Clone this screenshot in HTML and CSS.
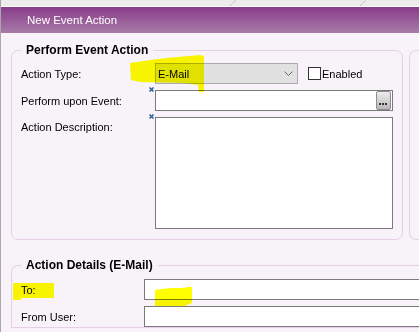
FILE: index.html
```html
<!DOCTYPE html>
<html lang="en">
<head>
    <meta charset="UTF-8">
    <meta name="viewport" content="width=device-width, initial-scale=1.0">
    <title>New Event Action</title>
    <link rel="stylesheet" href="styles.css">
</head>
<body>
    <div class="page">
        <div class="topbar">
            <svg width="418" height="6" viewBox="0 0 418 6">
                <line x1="229" y1="6" x2="235" y2="0" stroke="#a8a8a8" stroke-dasharray="1 1"/>
                <line x1="359" y1="6" x2="365" y2="0" stroke="#a8a8a8" stroke-dasharray="1 1"/>
            </svg>
        </div>
        <div class="titlebar">New Event Action</div>

        <div class="content">
            <div class="toprow">
                <fieldset class="group group-main">
                    <legend>Perform Event Action</legend>
                    <div class="form">
                        <label>Action Type:</label>
                        <div class="field field-row">
                            <div class="combo">
                                <span>E-Mail</span>
                                <svg width="9" height="5" viewBox="0 0 9 5"><path d="M0.5 0.5 L4.5 4.5 L8.5 0.5" fill="none" stroke="#666" stroke-width="1"/></svg>
                            </div>
                            <label class="check"><span class="box"></span>Enabled</label>
                        </div>

                        <label>Perform upon Event:</label>
                        <div class="field">
                            <svg class="req" width="5" height="5" viewBox="0 0 5 5"><path d="M0.5 0.5 L4.5 4.5 M4.5 0.5 L0.5 4.5" stroke="#2d5c9a" stroke-width="1.5"/></svg>
                            <div class="input with-button">
                                <span class="dots">
                                    <svg width="9" height="2" viewBox="0 0 9 2"><rect x="0" y="0" width="2" height="2" fill="#333"/><rect x="3" y="0" width="2" height="2" fill="#333"/><rect x="6" y="0" width="2" height="2" fill="#333"/></svg>
                                </span>
                            </div>
                        </div>

                        <label class="top">Action Description:</label>
                        <div class="field">
                            <svg class="req" width="5" height="5" viewBox="0 0 5 5"><path d="M0.5 0.5 L4.5 4.5 M4.5 0.5 L0.5 4.5" stroke="#2d5c9a" stroke-width="1.5"/></svg>
                            <div class="textarea"></div>
                        </div>
                    </div>
                </fieldset>
                <fieldset class="group group-side"></fieldset>
            </div>

            <fieldset class="group group-details">
                <legend>Action Details (E-Mail)</legend>
                <div class="form form-details">
                    <label>To:</label>
                    <div class="input"></div>
                    <label>From User:</label>
                    <div class="input"></div>
                </div>
            </fieldset>
        </div>
    </div>

    <!-- yellow marker strokes on top of the screenshot -->
    <svg class="marks" width="419" height="332" viewBox="0 0 419 332">
        <polygon points="130,63 150,60 166,58 200,55 204,56 204,92 199,92 198,85 185,83 140,82 131,80" fill="#ffff00"/>
        <polygon points="13,283 54,283 54,298 21,298 21,300 13,300" fill="#ffff00"/>
        <polygon points="155,290 161,289 171,288 185,288 186,287 192,287 192,303 189,304 185,306 155,306" fill="#ffff00"/>
    </svg>
</body>
</html>
```

FILE: styles.css
```css
html, body {
    margin: 0;
    background: #f8f3f9;
}
body {
    position: relative;
    width: 419px;
    height: 332px;
    overflow: hidden;
    font-family: "Liberation Sans", Arial, sans-serif;
    font-size: 11px;
    color: #000;
}
.page {
    border-left: 1px solid #a8a8a8;
    height: 100%;
}
.topbar {
    height: 6px;
    background: #ebebeb;
    border-bottom: 1px solid #fff;
}
.topbar svg { display: block; }
.titlebar {
    height: 26px;
    line-height: 26px;
    padding-left: 26px;
    color: #fff;
    font-size: 11.5px;
    background: linear-gradient(#883c88, #a97ba9);
}
.content {
    padding: 10px 0 0 10px;
}
.toprow {
    display: flex;
    gap: 6px;
}
fieldset.group {
    margin: 0;
    border: 1px solid #e6d0e6;
    border-radius: 7px;
    padding: 6px 9px 10px 9px;
    min-width: 0;
    box-sizing: border-box;
}
legend {
    font-weight: bold;
    font-size: 12px;
    line-height: 14px;
    padding: 0 5px;
}
.group-main {
    flex: none;
    width: 392px;
}
/* these two run off the right edge of the window */
fieldset.group-side {
    flex: 1;
    margin-top: 7px;
    padding: 0;
    border-right: none;
    border-radius: 7px 0 0 7px;
}
fieldset.group-details {
    margin-top: 18px;
    padding: 7px 0 0 9px;
    border-right: none;
    border-radius: 7px 0 0 0;
}
.form {
    display: grid;
    grid-template-columns: 134px 238px;
    row-gap: 6px;
    align-items: center;
}
.form-details {
    grid-template-columns: 123px 1fr;
}
.form-details .input {
    border-right: none;
}
.form label {
    line-height: 14px;
}
.form label.top {
    align-self: start;
    padding-top: 3px;
}
.field {
    position: relative;
}
.field-row {
    display: flex;
    align-items: center;
    gap: 10px;
}
.combo {
    display: flex;
    align-items: center;
    justify-content: space-between;
    width: 143px;
    height: 21px;
    box-sizing: border-box;
    border: 1px solid #acacac;
    background: #e1e1e1;
    padding: 0 4px 0 2px;
}
.combo svg { display: block; }
.check {
    display: flex;
    align-items: center;
    gap: 1px;
}
.box {
    width: 13px;
    height: 13px;
    box-sizing: border-box;
    border: 1px solid #333;
    background: #fff;
}
.req {
    position: absolute;
    left: -6px;
    top: -3px;
}
.input {
    height: 21px;
    box-sizing: border-box;
    border: 1px solid #7a7a7a;
    background: #fff;
}
.with-button {
    display: flex;
    justify-content: flex-end;
    align-items: center;
    padding-right: 1px;
}
.dots {
    width: 15px;
    height: 19px;
    box-sizing: border-box;
    border: 1px solid #8c8c8c;
    border-radius: 2px;
    background: linear-gradient(#ececec, #b9b9b9);
    padding: 11px 0 0 2px;
}
.dots svg { display: block; }
.textarea {
    height: 112px;
    box-sizing: border-box;
    border: 1px solid #7a7a7a;
    background: #fff;
}
.marks {
    position: absolute;
    left: 0;
    top: 0;
    pointer-events: none;
    mix-blend-mode: multiply;
}
```
